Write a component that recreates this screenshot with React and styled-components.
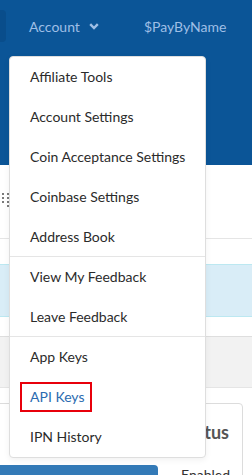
import React from "react";
import styled, { createGlobalStyle } from "styled-components";

const Global = createGlobalStyle`
  html, body { margin: 0; padding: 0; }
  body {
    width: 252px;
    height: 475px;
    overflow: hidden;
    background: #fff;
    font-family: Lato, "Open Sans", "Liberation Sans", sans-serif;
  }
  * { box-sizing: border-box; }
`;

const Page = styled.div`
  position: relative;
  width: 252px;
  height: 475px;
  overflow: hidden;
`;

const Header = styled.header`
  background: #0b5597;
  height: 165px;
`;

const Nav = styled.nav`
  display: flex;
  align-items: center;
  height: 52px;
`;

const SearchStub = styled.div`
  width: 6px;
  height: 32px;
  background: #094d8b;
  border-radius: 0 4px 4px 0;
`;

const NavLink = styled.a`
  display: flex;
  align-items: center;
  gap: 9px;
  margin-left: ${(p) => p.$ml}px;
  color: #9fbfe6;
  font-size: 14px;
  text-decoration: none;
  white-space: nowrap;
`;

const Section = styled.div`
  position: relative;
  height: ${(p) => p.$h}px;
  background: ${(p) => p.$bg || "#fff"};
  border-top: ${(p) => (p.$bt ? `1px solid ${p.$bt}` : "none")};
  border-bottom: ${(p) => (p.$bb ? `1px solid ${p.$bb}` : "none")};
`;

const Handle = styled.svg`
  position: absolute;
  left: 2px;
  top: 28px;
`;

const Card = styled.div`
  margin-left: -20px;
  width: 263px;
  height: 80px;
  border: 1px solid #dcdcdc;
  border-radius: 4px;
`;

const CardHead = styled.div`
  display: flex;
  justify-content: flex-end;
  align-items: center;
  height: 56px;
  padding-right: 13px;
  color: #555;
  font-size: 18px;
  font-weight: 700;
`;

const CardRow = styled.div`
  display: flex;
  align-items: flex-start;
  margin-top: 5px;
`;

const Bar = styled.div`
  width: 177px;
  height: 20px;
  background: #337ab7;
  border-radius: 0 4px 4px 0;
`;

const CellText = styled.span`
  margin-left: 23px;
  padding-top: 1px;
  color: #333;
  font-size: 14px;
`;

const Menu = styled.ul`
  position: absolute;
  left: 9px;
  top: 56px;
  width: 197px;
  margin: 0;
  padding: 0;
  list-style: none;
  background: #fff;
  border: 1px solid #dedede;
  border-radius: 4px;
  box-shadow: 0 2px 6px rgba(0, 0, 0, 0.06);
`;

const Item = styled.li`
  height: 40px;
  line-height: 40px;
  padding-left: 20px;
  font-size: 14px;
  color: #2b2b2b;
  white-space: nowrap;
  border-bottom: ${(p) => (p.$divider ? "1px solid #e5e5e5" : "none")};
`;

const Highlight = styled.span`
  display: inline-block;
  margin-left: -10px;
  padding: 0 5px 0 8px;
  line-height: 26px;
  border: 2px solid #e8000b;
  color: #2a6bb0;
  vertical-align: middle;
  position: relative;
  top: -1px;
`;

const items = [
  { t: "Affiliate Tools" },
  { t: "Account Settings" },
  { t: "Coin Acceptance Settings" },
  { t: "Coinbase Settings" },
  { t: "Address Book", divider: true },
  { t: "View My Feedback" },
  { t: "Leave Feedback", divider: true },
  { t: "App Keys" },
  { t: "API Keys", hl: true },
  { t: "IPN History" },
];

export default function App() {
  return (
    <Page>
      <Global />
      <Header>
        <Nav>
          <SearchStub />
          <NavLink $ml={23}>
            Account
            <svg width="10" height="7" viewBox="0 0 10 7">
              <polyline
                points="1.2,1.2 5,5 8.8,1.2"
                fill="none"
                stroke="#9fbfe6"
                strokeWidth="2.4"
              />
            </svg>
          </NavLink>
          <NavLink $ml={45}>$PayByName</NavLink>
        </Nav>
      </Header>
      <Section $h={74} $bb="#e5e5e5">
        <Handle width="8" height="16" viewBox="0 0 8 16">
          {[
            [0, 0], [5, 0], [0, 4], [5, 4], [0, 8], [5, 8], [5, 12],
          ].map(([x, y], i) => (
            <rect key={i} x={x} y={y} width="2" height="2" fill="#7a7a7a" />
          ))}
        </Handle>
      </Section>
      <Section $h={25} />
      <Section $h={53} $bg="#d9edf7" $bt="#bce8f1" $bb="#bce8f1" />
      <Section $h={19} />
      <Section $h={52} $bg="#f2f2f2" $bt="#dedede" $bb="#e5e5e5" />
      <Section $h={15} />
      <Card>
        <CardHead>Status</CardHead>
        <CardRow>
          <Bar />
          <CellText>Enabled</CellText>
        </CardRow>
      </Card>
      <Menu>
        {items.map((it) => (
          <Item key={it.t} $divider={it.divider}>
            {it.hl ? <Highlight>{it.t}</Highlight> : it.t}
          </Item>
        ))}
      </Menu>
    </Page>
  );
}
